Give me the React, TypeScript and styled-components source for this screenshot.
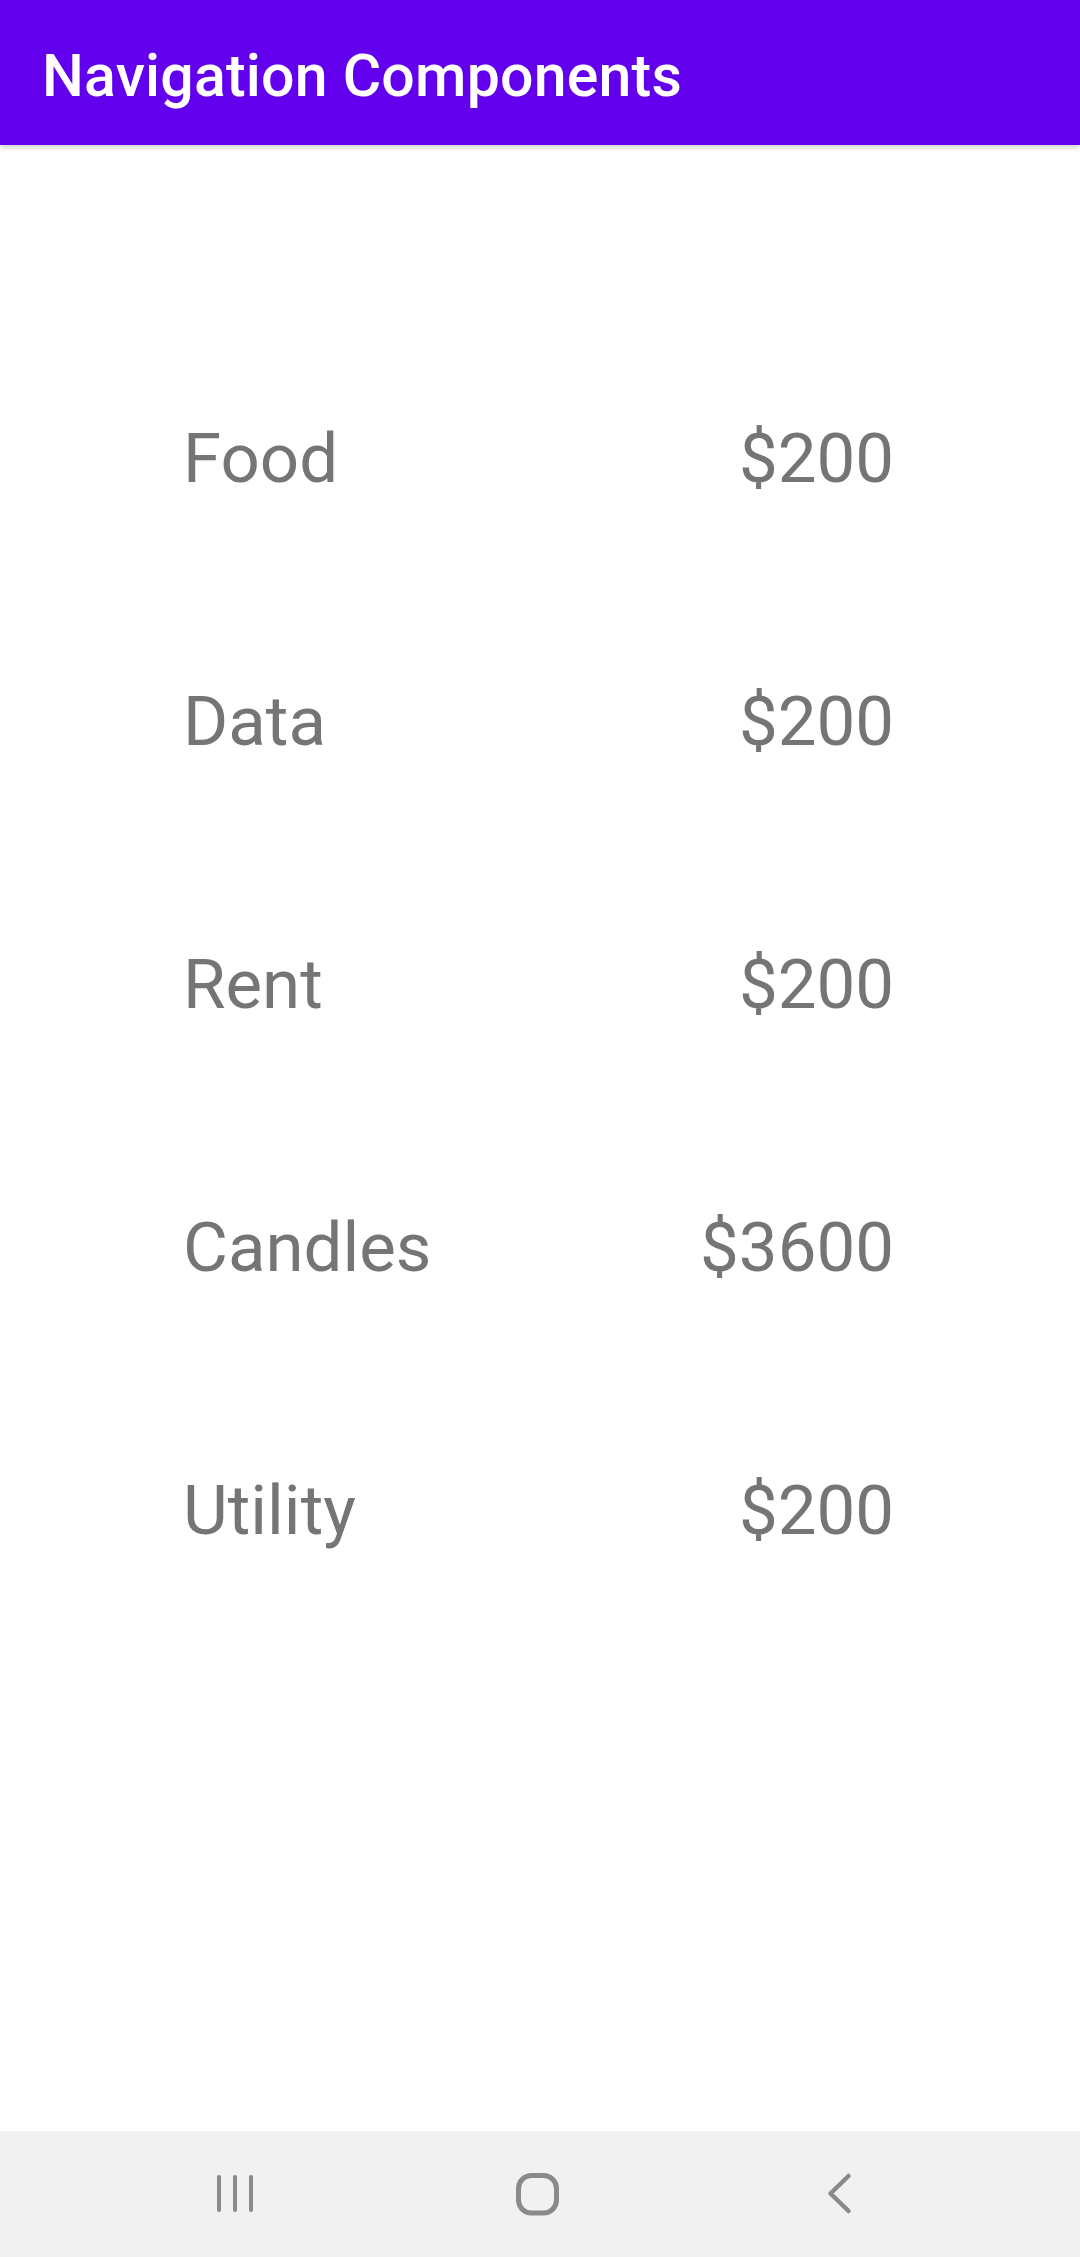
import React from "react";
import styled, { createGlobalStyle } from "styled-components";

const GlobalStyle = createGlobalStyle`
  html, body {
    margin: 0;
    padding: 0;
    background: #ffffff;
  }
  body {
    font-family: Roboto, "Noto Sans", "Liberation Sans", sans-serif;
  }
  * { box-sizing: border-box; }
`;

const Screen = styled.div`
  display: flex;
  flex-direction: column;
  width: 1080px;
  height: 2257px;
  background: #ffffff;
  overflow: hidden;
`;

const Toolbar = styled.header`
  position: relative;
  z-index: 1;
  display: flex;
  align-items: center;
  height: 145px;
  padding: 5px 0 0 42px;
  background: #6200ee;
  box-shadow: 0 2px 6px rgba(0, 0, 0, 0.22);
`;

const Title = styled.h1`
  margin: 0;
  font-family: Roboto, "Noto Sans", sans-serif;
  font-weight: 500;
  font-size: 59px;
  color: #ffffff;
  letter-spacing: 0.2px;
`;

const Content = styled.main`
  flex: 1;
  display: flex;
  flex-direction: column;
  padding: 182px 186px 0 183px;
`;

const Row = styled.div`
  display: flex;
  align-items: center;
  justify-content: space-between;
  height: 263px;
`;

const Label = styled.span<{ $align?: "left" | "right" }>`
  font-family: Roboto, "Noto Sans", sans-serif;
  font-weight: 400;
  font-size: 69px;
  color: #757575;
  text-align: ${(p) => p.$align ?? "left"};
`;

const NavBar = styled.nav`
  display: flex;
  justify-content: center;
  align-items: center;
  height: 126px;
  background: #f1f1f1;
`;

const NavButton = styled.div`
  display: flex;
  justify-content: center;
  align-items: center;
  width: 305px;
  height: 126px;
`;

const Icon = styled.svg`
  width: 60px;
  height: 60px;
  display: block;
`;

const items = [
  { name: "Food", amount: "$200" },
  { name: "Data", amount: "$200" },
  { name: "Rent", amount: "$200" },
  { name: "Candles", amount: "$3600" },
  { name: "Utility", amount: "$200" },
];

const iconColor = "#8a8a8a";

const RecentsIcon = () => (
  <Icon viewBox="0 0 60 60">
    <rect x="12" y="11" width="4" height="37" rx="2" fill={iconColor} />
    <rect x="28" y="11" width="4" height="37" rx="2" fill={iconColor} />
    <rect x="44" y="11" width="4" height="37" rx="2" fill={iconColor} />
  </Icon>
);

const HomeIcon = () => (
  <Icon viewBox="0 0 60 60">
    <rect
      x="8.5"
      y="11.5"
      width="38"
      height="37.5"
      rx="13"
      fill="none"
      stroke={iconColor}
      strokeWidth="5"
    />
  </Icon>
);

const BackIcon = () => (
  <Icon viewBox="0 0 60 60">
    <path
      d="M33.5 12 L15.5 29.5 L33.5 47"
      fill="none"
      stroke={iconColor}
      strokeWidth="4.5"
      strokeLinecap="round"
      strokeLinejoin="round"
    />
  </Icon>
);

export default function App() {
  return (
    <>
      <GlobalStyle />
      <Screen>
        <Toolbar>
          <Title>Navigation Components</Title>
        </Toolbar>
        <Content>
          {items.map((it) => (
            <Row key={it.name}>
              <Label>{it.name}</Label>
              <Label $align="right">{it.amount}</Label>
            </Row>
          ))}
        </Content>
        <NavBar>
          <NavButton>
            <RecentsIcon />
          </NavButton>
          <NavButton>
            <HomeIcon />
          </NavButton>
          <NavButton>
            <BackIcon />
          </NavButton>
        </NavBar>
      </Screen>
    </>
  );
}
